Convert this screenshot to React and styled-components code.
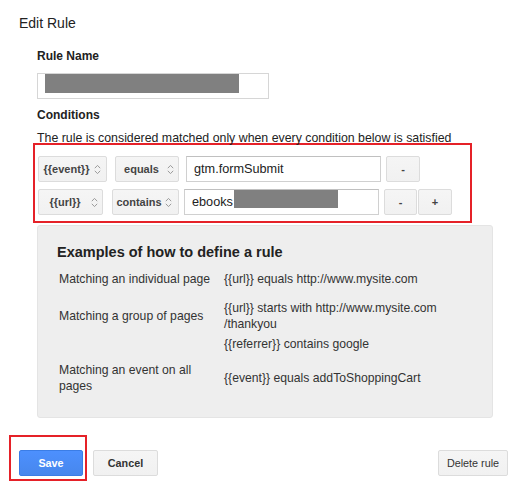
import React from "react";
import styled, { createGlobalStyle } from "styled-components";

const Global = createGlobalStyle`
  html, body { margin: 0; padding: 0; background: #fff; }
  body { font-family: "Liberation Sans", Arial, sans-serif; color: #222; }
  * { box-sizing: border-box; }
`;

const Page = styled.div`
  width: 519px;
  padding: 15px 11px 0 19px;
`;

const Title = styled.div`
  font-size: 14px;
  line-height: 16px;
  color: #222;
`;

const Content = styled.div`
  margin-left: 18px;
`;

const Label = styled.div`
  margin-top: ${(p) => p.$mt}px;
  font-size: 12px;
  line-height: 16px;
  font-weight: bold;
  color: #222;
`;

const NameInput = styled.div`
  margin-top: 9px;
  width: 232px;
  height: 26px;
  border: 1px solid #d6d6d6;
  display: flex;
`;

const Redact = styled.span`
  display: block;
  background: #808080;
  width: ${(p) => p.$w}px;
  height: ${(p) => p.$h}px;
  margin-left: ${(p) => p.$ml}px;
  align-self: flex-start;
`;

const Desc = styled.div`
  margin-top: 7px;
  font-size: 12.35px;
  line-height: 16px;
  color: #222;
  white-space: nowrap;
`;

const Highlight = styled.div`
  margin-top: -3px;
  margin-left: -4px;
  width: 439px;
  border: 2px solid #e52128;
  padding: 11px 0 6px 3px;
  display: flex;
  flex-direction: column;
  gap: 7px;
`;

const CondRow = styled.div`
  display: flex;
  align-items: center;
  height: 26px;
`;

const Select = styled.div`
  width: ${(p) => p.$w}px;
  margin-left: ${(p) => p.$ml || 0}px;
  height: 26px;
  border: 1px solid #dcdcdc;
  border-radius: 2px;
  background: linear-gradient(#f5f5f5, #f1f1f1);
  display: flex;
  align-items: center;
  padding-right: ${(p) => p.$pr}px;
  font-size: 11px;
  font-weight: bold;
  color: #444;
`;

const SelectText = styled.span`
  flex: 1;
  text-align: center;
`;

const Input = styled.div`
  width: 195px;
  margin-left: ${(p) => p.$ml}px;
  height: 26px;
  border: 1px solid #d0d0d0;
  border-top-color: #c0c0c0;
  padding-left: 7px;
  display: flex;
  align-items: center;
  font-size: 12.7px;
  color: #222;
`;

const SmallBtn = styled.div`
  width: ${(p) => p.$w}px;
  margin-left: ${(p) => p.$ml}px;
  height: 26px;
  border: 1px solid #dcdcdc;
  border-radius: 2px;
  background: linear-gradient(#f5f5f5, #f1f1f1);
  display: flex;
  align-items: center;
  justify-content: center;
  font-size: 11px;
  font-weight: bold;
  color: #444;
`;

const Examples = styled.div`
  margin-top: 2px;
  width: 456px;
  background: #eeeeee;
  border: 1px solid #e4e4e4;
  border-radius: 3px;
  padding: 17px 20px 23px 19px;
`;

const ExHeading = styled.div`
  font-size: 14.5px;
  line-height: 18px;
  font-weight: bold;
  color: #222;
`;

const ExRow = styled.div`
  display: grid;
  grid-template-columns: 158px 1fr;
  column-gap: 7px;
  align-items: center;
  margin-top: ${(p) => p.$mt}px;
  padding-left: 2px;
  font-size: 12.2px;
  line-height: 16px;
  color: #333;
`;

const Footer = styled.div`
  display: flex;
  align-items: flex-end;
  margin-top: 17px;
`;

const SaveMark = styled.div`
  margin-left: -10px;
  border: 2px solid #e52128;
  padding: 13px 2px 3px 8px;
`;

const Button = styled.div`
  width: ${(p) => p.$w}px;
  height: 26px;
  margin-left: ${(p) => (p.$push ? "auto" : `${p.$ml || 0}px`)};
  margin-bottom: ${(p) => p.$mb || 0}px;
  border-radius: 2px;
  display: flex;
  align-items: center;
  justify-content: center;
  font-size: 10.8px;
  font-weight: ${(p) => (p.$bold ? "bold" : "normal")};
  ${(p) =>
    p.$primary
      ? `background: linear-gradient(#4d90fe, #4787ed);
         border: 1px solid #3b7de6;
         color: #fff;`
      : `background: linear-gradient(#f5f5f5, #f1f1f1);
         border: 1px solid #dcdcdc;
         color: #333;`}
`;

const Chevron = () => (
  <svg width="7" height="11" viewBox="0 0 7 11" fill="none">
    <path d="M0.8 4.2 L3.5 1.4 L6.2 4.2" stroke="#9a9a9a" strokeWidth="1" />
    <path d="M0.8 6.8 L3.5 9.6 L6.2 6.8" stroke="#9a9a9a" strokeWidth="1" />
  </svg>
);

const Sel = ({ w, ml, pr, children }) => (
  <Select $w={w} $ml={ml} $pr={pr}>
    <SelectText>{children}</SelectText>
    <Chevron />
  </Select>
);

export default function App() {
  return (
    <>
      <Global />
      <Page>
        <Title>Edit Rule</Title>
        <Content>
          <Label $mt={17}>Rule Name</Label>
          <NameInput>
            <Redact $w={194} $h={19} $ml={7} />
          </NameInput>
          <Label $mt={8}>Conditions</Label>
          <Desc>The rule is considered matched only when every condition below is satisfied</Desc>
          <Highlight>
            <CondRow>
              <Sel w={69} pr={5}>{"{{event}}"}</Sel>
              <Sel w={64} ml={8} pr={4}>equals</Sel>
              <Input $ml={7}>gtm.formSubmit</Input>
              <SmallBtn $w={34} $ml={5}>-</SmallBtn>
            </CondRow>
            <CondRow>
              <Sel w={65} pr={4}>{"{{url}}"}</Sel>
              <Sel w={67} ml={9} pr={6}>contains</Sel>
              <Input $ml={5}>
                ebooks
                <Redact $w={104} $h={18} $ml={1} />
              </Input>
              <SmallBtn $w={33} $ml={5}>-</SmallBtn>
              <SmallBtn $w={34} $ml={1}>+</SmallBtn>
            </CondRow>
          </Highlight>
          <Examples>
            <ExHeading>Examples of how to define a rule</ExHeading>
            <ExRow $mt={10}>
              <div>Matching an individual page</div>
              <div>{"{{url}}"} equals http://www.mysite.com</div>
            </ExRow>
            <ExRow $mt={13}>
              <div>Matching a group of pages</div>
              <div>
                {"{{url}}"} starts with http://www.mysite.com
                <br />
                /thankyou
              </div>
            </ExRow>
            <ExRow $mt={4}>
              <div />
              <div>{"{{referrer}}"} contains google</div>
            </ExRow>
            <ExRow $mt={10}>
              <div>Matching an event on all pages</div>
              <div>{"{{event}}"} equals addToShoppingCart</div>
            </ExRow>
          </Examples>
        </Content>
        <Footer>
          <SaveMark>
            <Button $primary $bold $w={64}>Save</Button>
          </SaveMark>
          <Button $bold $w={65} $ml={6} $mb={5}>Cancel</Button>
          <Button $push $w={70} $mb={5}>Delete rule</Button>
        </Footer>
      </Page>
    </>
  );
}
